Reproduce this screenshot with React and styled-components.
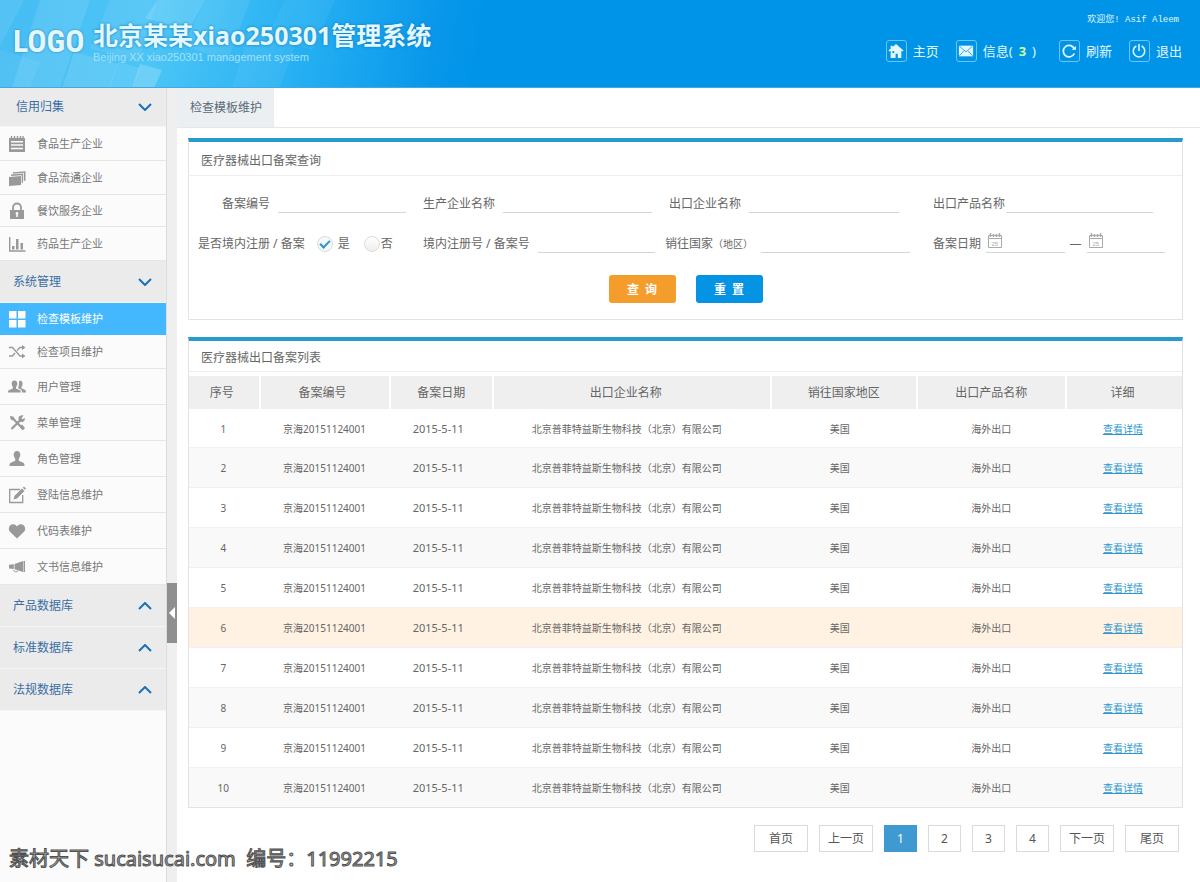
import React, { useState } from 'react';
import styled, { createGlobalStyle, css } from 'styled-components';

const GlobalStyle = createGlobalStyle`
  * {
    box-sizing: border-box;
  }
  body {
    margin: 0;
    background: #fff;
    color: #666;
    font-family: "Noto Sans", "Noto Sans CJK SC", sans-serif;
    font-size: 12px;
    line-height: 16px;
  }
  button, input {
    font: inherit;
    color: inherit;
  }
`;

/* ---------- icons ---------- */

const Glyph = styled.svg`
  display: block;
  flex: none;
  width: ${(props) => props.$size || 18}px;
  height: ${(props) => props.$size || 18}px;
`;

const Icon = ({ size, children }) => (
  <Glyph $size={size} viewBox="0 0 18 18" fill="currentColor" aria-hidden="true">
    {children}
  </Glyph>
);

const stroke = { fill: 'none', stroke: 'currentColor' };

const icons = {
  notepad: (
    <g>
      <path fillRule="evenodd" d="M1 3h16v14H1zM3 6v1.500h12V6zM3 9.300v1.500h12V9.300zM3 12.700v1.500h12v-1.500z" />
      <path {...stroke} strokeWidth="1.400" d="M3.500 1v3M6.500 1v3M9.500 1v3M12.500 1v3M15 1v3" />
    </g>
  ),
  layers: (
    <g>
      <path d="M1 8l12-1v9l-12 1z" />
      <path d="M3 5.500L15 4.500v9.500h-1.300V6.200L3 7zM5 3.300l12.500-1v9.500h-1.700V3.800L5 4.700z" />
    </g>
  ),
  lock: (
    <g>
      <path {...stroke} strokeWidth="1.800" d="M5 8V5.500a4 4 0 0 1 8 0V8" />
      <path fillRule="evenodd" d="M2 8h14v9H2zM9 10a1.500 1.500 0 0 0-.8 2.700V15h1.600v-2.300A1.500 1.500 0 0 0 9 10z" />
    </g>
  ),
  chart: (
    <g>
      <path {...stroke} strokeWidth="1.400" d="M1.700 2v14H17.500" />
      <path d="M4 11h2.500v3.500H4zM8 4h2.500v10.500H8zM12.500 8H15v6.500h-2.500z" />
    </g>
  ),
  grid: <path d="M1 1h7.500v7.500H1zM10 1h7.500v7.500H10zM1 10h7.500v7.500H1zM10 10h7.500v7.500H10z" />,
  shuffle: (
    <g>
      <path {...stroke} strokeWidth="1.300" d="M1 4.500h3.500L12 13h3M1 13h3.500l2.500-3M9 7.500l3-3h3" />
      <path d="M14 2l3.500 2.500L14 7zM14 10.500l3.500 2.500-3.500 2.500z" />
    </g>
  ),
  users: (
    <g>
      <path d="M6.500 2.500c2 0 3 1.500 2.800 3.500-.1 1.400-.8 2.300-1.300 3v1.500l4 1.700c.6.400.8 1 .8 2.300H0c0-1.300.2-1.900.8-2.300l4-1.700V9C4.300 8.300 3.800 7.400 3.700 6c-.2-2 .8-3.500 2.800-3.500z" />
      <path d="M11 3c2.400-.7 3.800.8 3.600 3-.1 1.300-.7 2.300-1.200 3v1.300l3.400 1.500c.9.500 1.200 1.200 1.200 2.700h-4c0-2-.5-3-2.300-3.600l-1.500-.7C10.600 8.500 11.300 5.500 11 3z" />
    </g>
  ),
  tools: (
    <g>
      <path {...stroke} strokeWidth="2.200" d="M4 3.500l10.500 11M3.500 15L12 6.500" />
      <path d="M2 2l3 .5 1.500 2-2 2L2.500 5zM15.500 1.500L13.500 4l.8 1.200L16.800 4c.5 2-.8 4-3 4-2.300 0-3.800-1.800-3.300-4 .4-1.800 2.500-3.100 5-2.500zM12 12l2-1.500 3 3.500-2.500 2.500z" />
    </g>
  ),
  user: (
    <path d="M9 1c2.300 0 3.500 1.700 3.300 4-.1 1.600-.9 2.800-1.500 3.600v2.200l4.500 2c.9.500 1.200 1.200 1.200 3.200h-15c0-2 .3-2.700 1.200-3.200l4.500-2V8.600C6.600 7.800 5.800 6.600 5.700 5 5.500 2.700 6.700 1 9 1z" />
  ),
  edit: (
    <g>
      <path {...stroke} strokeWidth="1.300" d="M12 3.500H1.700v13h13V9" />
      <path d="M5.500 13.500l1-3.800L14 2.500l2.500 2.500L9 12.500zM14.800 1.700L16 .6l2 2-1 1.200z" />
    </g>
  ),
  heart: (
    <path d="M9 16.500L2 9.800C-.3 7.300.8 2.500 4.800 2.200 6.800 2 8.300 3.200 9 4.600c.7-1.400 2.200-2.600 4.200-2.400 4 .3 5.100 5.100 2.800 7.600z" />
  ),
  horn: (
    <g>
      <path d="M6.500 6L15 3v11l-8.500-2.700zM15.500 3H17v11h-1.500zM1 6.800l4.800-.6v4.800L1 10.500z" />
      <path {...stroke} d="M5.500 12c.5 2 3.500 2.500 4.500.8" />
    </g>
  ),
  home: (
    <path fillRule="evenodd" d="M9 1l8.500 7.500-1.200 1.200L15 8.700V17h-4v-5H8.500v5H3V8.700l-1.300 1L.5 8.500 3 6.300V3h2.200v1.400zM5 9v2.200h2V9z" />
  ),
  mail: (
    <g>
      <path d="M1 3h16v12H1z" />
      <path fill="none" stroke="#2f9fe4" strokeWidth="1" d="M1.500 3.500L9 10l7.500-6.500M1.500 14.500L7 8.500M16.500 14.500L11 8.500" />
    </g>
  ),
  refresh: (
    <g>
      <path {...stroke} strokeWidth="2" d="M15.200 7A6.500 6.500 0 1 0 15 11.800" />
      <path d="M12 7.500h4.800V3.500z" />
    </g>
  ),
  power: <path {...stroke} strokeWidth="1.700" d="M9 1v8M6 3.400a6.500 6.500 0 1 0 6 0" />,
};

const Chevron = ({ up }) => (
  <svg width="14" height="8" viewBox="0 0 14 8" fill="none" stroke="#1b70b8" strokeWidth="2" aria-hidden="true">
    <path d={up ? 'M1 7l6-6 6 6' : 'M1 1l6 6 6-6'} />
  </svg>
);

/* ---------- header ---------- */

const Header = styled.header`
  position: relative;
  display: flex;
  justify-content: space-between;
  height: 88px;
  overflow: hidden;
  color: #e2f8ff;
  background: linear-gradient(100deg, #46bdf3 0, #4cc5f6 160px, #27b1f3 300px, #0796ea 440px, #0094e8 480px);
  border-bottom: 1px solid #3fa9e0;
`;

const Shards = styled.svg`
  position: absolute;
  left: 0;
  top: 0;
`;

const Brand = styled.div`
  position: relative;
  display: flex;
  align-items: center;
  gap: 8px;
  padding: 0 0 5px 13px;
`;

const Logo = styled.div`
  width: 72px;
  font-family: "Roboto Condensed", "Liberation Sans", sans-serif;
  font-size: 32px;
  line-height: 40px;
  font-weight: 700;
  text-shadow: 0 0 2px #1a6ea5;
`;

const Title = styled.h1`
  margin: 0;
  font-size: 25px;
  line-height: 32px;
  font-weight: 700;
  text-shadow: 0 0 3px #1476b5;
`;

const Subtitle = styled.div`
  font-family: "Liberation Sans", sans-serif;
  font-size: 11px;
  line-height: 12px;
  color: #a5e0fb;
`;

const HeaderSide = styled.div`
  position: relative;
  display: flex;
  flex-direction: column;
  align-items: flex-end;
  gap: 12px;
  padding: 12px 18px 0 0;
`;

const Welcome = styled.div`
  padding-right: 3px;
  font-family: "Liberation Mono", "Noto Sans CJK SC", monospace;
  font-size: 9px;
`;

const HeaderNav = styled.nav`
  display: flex;
  gap: 17px;
`;

const HeaderLink = styled.a`
  display: flex;
  align-items: center;
  gap: 6px;
  padding-right: ${(props) => (props.$spaced ? 6 : 0)}px;
  font-size: 13px;
  line-height: 22px;
  color: inherit;
  text-decoration: none;
  white-space: nowrap;
`;

const IconBox = styled.span`
  display: grid;
  place-items: center;
  width: 21px;
  height: 22px;
  border: 1px solid #6cc5f5;
  border-radius: 3px;
`;

const Count = styled.b`
  margin: 0 6px;
  color: #c8ff9e;
`;

const PageHeader = () => (
  <Header>
    <Shards width="450" height="88" viewBox="0 0 450 88" fill="#fff" aria-hidden="true">
      <path opacity=".1" d="M40 0h50L60 88H12z" />
      <path opacity=".08" d="M0 0h24L0 46z" />
      <path opacity=".14" d="M158 0h47l-16 30-44-12z" />
      <path opacity=".08" d="M110 0h48l-20 62-48-14z" />
      <path opacity=".08" d="M205 0h45l-22 60-45-14z" />
      <path opacity=".12" d="M74 52l44 12-8 24H62z" />
      <path opacity=".2" d="M140 64l22 6-8 18h-22z" />
      <path opacity=".1" d="M118 62l22 6-7 20h-24z" />
      <path opacity=".06" d="M250 30l46 12-16 46h-48z" />
      <path opacity=".05" d="M285 0h50l-22 50-46-12z" />
      <path opacity=".06" d="M0 50l40 12-10 26H0z" />
    </Shards>
    <Brand>
      <Logo>LOGO</Logo>
      <div>
        <Title>北京某某xiao250301管理系统</Title>
        <Subtitle>Beijing XX xiao250301 management system</Subtitle>
      </div>
    </Brand>
    <HeaderSide>
      <Welcome>欢迎您! Asif Aleem</Welcome>
      <HeaderNav>
        <HeaderLink href="#home"><IconBox><Icon size={16}>{icons.home}</Icon></IconBox>主页</HeaderLink>
        <HeaderLink href="#mail" $spaced>
          <IconBox><Icon size={16}>{icons.mail}</Icon></IconBox>
          <span>信息(<Count>3</Count>)</span>
        </HeaderLink>
        <HeaderLink href="#refresh"><IconBox><Icon size={16}>{icons.refresh}</Icon></IconBox>刷新</HeaderLink>
        <HeaderLink href="#exit"><IconBox><Icon size={16}>{icons.power}</Icon></IconBox>退出</HeaderLink>
      </HeaderNav>
    </HeaderSide>
  </Header>
);

/* ---------- sidebar ---------- */

const Sidebar = styled.aside`
  flex: none;
  width: 166px;
  background: #fbfbfb;
`;

const GroupButton = styled.button`
  display: flex;
  align-items: center;
  justify-content: space-between;
  width: 100%;
  height: ${(props) => (props.$first ? 39 : 42)}px;
  padding: 0 14px 0 ${(props) => (props.$first ? 16 : 13)}px;
  border: 0;
  border-bottom: 1px solid #f6f6f6;
  background: #ebebeb;
  color: #3a6ea5;
  text-align: left;
  cursor: pointer;
`;

const Menu = styled.ul`
  margin: 0;
  padding: 0;
  list-style: none;
`;

const itemHeights = { small: 32, medium: 34, large: 36 };

const MenuLink = styled.a`
  display: flex;
  align-items: center;
  gap: 11px;
  height: ${(props) => itemHeights[props.$height]}px;
  padding-left: 8px;
  border-bottom: 1px solid #e6e6e6;
  color: #777;
  font-size: 11px;
  text-decoration: none;
  svg {
    color: #999;
  }
  ${(props) => props.$active && css`
    background: #43b8fe;
    border-color: #43b8fe;
    color: #fff;
    svg {
      color: #fff;
    }
  `}
`;

const Splitter = styled.div`
  display: flex;
  flex-direction: column;
  flex: none;
  width: 11px;
  padding-top: 495px;
  background: #efefef;
  border-left: 1px solid #dcdcdc;
`;

const CollapseButton = styled.button`
  display: grid;
  place-items: center;
  height: 60px;
  padding: 0;
  border: 0;
  background: #8f8f8f;
  cursor: pointer;
`;

const groups = [
  {
    title: '信用归集',
    open: true,
    items: [
      ['notepad', '食品生产企业', 'medium'],
      ['layers', '食品流通企业', 'medium'],
      ['lock', '餐饮服务企业', 'small'],
      ['chart', '药品生产企业', 'medium'],
    ],
  },
  {
    title: '系统管理',
    open: true,
    items: [
      ['grid', '检查模板维护', 'small'],
      ['shuffle', '检查项目维护', 'medium'],
      ['users', '用户管理', 'large'],
      ['tools', '菜单管理', 'large'],
      ['user', '角色管理', 'large'],
      ['edit', '登陆信息维护', 'large'],
      ['heart', '代码表维护', 'large'],
      ['horn', '文书信息维护', 'large'],
    ],
  },
  { title: '产品数据库', items: [] },
  { title: '标准数据库', items: [] },
  { title: '法规数据库', items: [] },
];

const SideMenu = () => (
  <Sidebar>
    {groups.map((group, i) => (
      <div key={group.title}>
        <GroupButton type="button" $first={i === 0}>
          {group.title}
          <Chevron up={!group.open} />
        </GroupButton>
        <Menu>
          {group.items.map(([icon, label, height]) => (
            <li key={label}>
              <MenuLink href="#menu" $height={height} $active={icon === 'grid'}>
                <Icon>{icons[icon]}</Icon>
                {label}
              </MenuLink>
            </li>
          ))}
        </Menu>
      </div>
    ))}
  </Sidebar>
);

/* ---------- content ---------- */

const Body = styled.div`
  display: flex;
  min-height: calc(100vh - 88px);
`;

const Main = styled.main`
  flex: 1;
  min-width: 0;
`;

const TabBar = styled.div`
  display: flex;
  height: 40px;
  border-bottom: 1px solid #e3e8e8;
`;

const Tab = styled.a`
  padding: 12px 12px 11px 13px;
  background: #eceff1;
  color: #5a6b7b;
  text-decoration: none;
`;

const Content = styled.div`
  display: flex;
  flex-direction: column;
  gap: 17px;
  padding: 10px 17px 0 11px;
`;

const Panel = styled.section`
  border: 1px solid #e3e3e3;
  border-top: 4px solid #259ccb;
`;

const PanelTitle = styled.h2`
  margin: 0;
  padding: ${(props) => (props.$tight ? '9px 12px 5px' : '11px 12px 6px')};
  border-bottom: 1px solid #eee;
  font-size: 12px;
  line-height: 16px;
  font-weight: 400;
`;

const Form = styled.form`
  padding: 17px 9px 16px;
`;

const Fields = styled.div`
  display: grid;
  grid-template-columns: minmax(0, 225fr) minmax(0, 242fr) minmax(0, 268fr) minmax(0, 240fr);
  row-gap: 20px;
`;

const Field = styled.div`
  display: flex;
  align-items: flex-end;
  gap: ${(props) => props.$gap || 8}px;
  height: 20px;
  padding-left: ${(props) => props.$start || 0}px;
  padding-right: ${(props) => props.$end || 0}px;
  line-height: 18px;
  white-space: nowrap;
`;

const TextInput = styled.input`
  flex: 1;
  min-width: 0;
  height: 20px;
  padding: 0 4px;
  border: 0;
  border-bottom: 1px solid #d4d4d4;
  background: none;
  outline: none;
`;

const Choice = styled.label`
  display: flex;
  align-items: center;
  gap: ${(props) => (props.$wide ? 5 : 1)}px;
  margin-left: ${(props) => (props.$wide ? 4 : 6)}px;
`;

const Radio = styled.input`
  appearance: none;
  display: grid;
  place-items: center;
  width: 16px;
  height: 16px;
  margin: 0;
  border: 1px solid #dcdcdc;
  border-radius: 50%;
  background: linear-gradient(#fff, #eee);
  &:checked {
    background: #f2fafd;
  }
  &:checked::after {
    content: "";
    width: 8px;
    height: 4px;
    margin-bottom: 2px;
    border: solid #3293c4;
    border-width: 0 0 2px 2px;
    transform: rotate(-45deg);
  }
`;

const Small = styled.span`
  font-size: 10px;
`;

const DateField = styled.label`
  display: flex;
  flex: 1;
  height: 20px;
  border-bottom: 1px solid #d4d4d4;
  color: #aaa;
`;

const DateInput = styled.input`
  flex: 1;
  width: 0;
  padding: 0;
  border: 0;
  background: none;
  outline: none;
`;

const Calendar = () => (
  <svg width="17" height="17" viewBox="0 0 17 17" fill="none" stroke="currentColor" aria-hidden="true">
    <path d="M2.500 2.500h13v12h-13zM2.500 5.500h13" />
    <path strokeWidth="1.500" d="M4.500 0v4M7.500 1v3M10.500 1v3M13.500 0v4" />
    <text x="5.500" y="12.500" fontSize="6" fontFamily="Liberation Sans" fill="currentColor" stroke="none">25</text>
  </svg>
);

const Actions = styled.div`
  display: flex;
  justify-content: center;
  gap: 20px;
  margin-top: 22px;
`;

const ActionButton = styled.button`
  width: 67px;
  height: 28px;
  padding: 1px 0 0;
  border: 0;
  border-radius: 3px;
  background: ${(props) => (props.$primary ? '#f59d2c' : '#0593e3')};
  color: #fff;
  font-weight: 700;
  white-space: pre;
  cursor: pointer;
`;

const SearchPanel = () => {
  const [registered, setRegistered] = useState('yes');

  return (
    <Panel>
      <PanelTitle>医疗器械出口备案查询</PanelTitle>
      <Form onSubmit={(e) => e.preventDefault()}>
        <Fields>
          <Field $start={24} $end={17}>
            <label htmlFor="recordNo">备案编号</label>
            <TextInput id="recordNo" />
          </Field>
          <Field $end={13}>
            <label htmlFor="maker">生产企业名称</label>
            <TextInput id="maker" />
          </Field>
          <Field $start={4} $end={34}>
            <label htmlFor="exporter">出口企业名称</label>
            <TextInput id="exporter" />
          </Field>
          <Field $gap={1} $end={20}>
            <label htmlFor="product">出口产品名称</label>
            <TextInput id="product" />
          </Field>
          <Field role="radiogroup" aria-label="是否境内注册 / 备案">
            <span>是否境内注册 / 备案</span>
            <Choice $wide>
              <Radio type="radio" name="registered" checked={registered === 'yes'} onChange={() => setRegistered('yes')} />
              是
            </Choice>
            <Choice>
              <Radio type="radio" name="registered" checked={registered === 'no'} onChange={() => setRegistered('no')} />
              否
            </Choice>
          </Field>
          <Field $end={10}>
            <label htmlFor="domesticNo">境内注册号 / 备案号</label>
            <TextInput id="domesticNo" />
          </Field>
          <Field $end={23}>
            <label htmlFor="country">销往国家<Small>（地区）</Small></label>
            <TextInput id="country" />
          </Field>
          <Field $gap={5} $end={8}>
            <span>备案日期</span>
            <DateField><Calendar /><DateInput aria-label="备案日期起" /></DateField>
            <span>—</span>
            <DateField><Calendar /><DateInput aria-label="备案日期止" /></DateField>
          </Field>
        </Fields>
        <Actions>
          <ActionButton type="submit" $primary>查  询</ActionButton>
          <ActionButton type="reset">重  置</ActionButton>
        </Actions>
      </Form>
    </Panel>
  );
};

const Table = styled.table`
  width: 100%;
  margin-top: 4px;
  border-collapse: collapse;
  table-layout: fixed;
  font-size: 10px;
  text-align: center;
`;

const Th = styled.th`
  width: ${(props) => props.$width};
  height: 33px;
  padding: 0 ${(props) => props.$shift || 0}px 0 0;
  border-right: 2px solid #fff;
  background: #efefef;
  font-size: 12px;
  font-weight: 400;
  &:last-child {
    border-right: 0;
  }
`;

const Row = styled.tr`
  height: 40px;
  border-top: 1px solid #f0f0f0;
  background: ${(props) => (props.$selected ? '#fff2e3' : '#fff')};
  &:nth-child(even) {
    background: ${(props) => (props.$selected ? '#fff2e3' : '#f9f9f9')};
  }
  &:first-child {
    height: 38px;
    border-top: 0;
  }
`;

const Td = styled.td`
  padding: 2px ${(props) => props.$shift || 0}px 0 0;
`;

const DateText = styled.span`
  font-size: 11px;
`;

const DetailLink = styled.a`
  color: #2f97cf;
`;

const columns = [
  { name: '序号', width: '7.1%', shift: 4 },
  { name: '备案编号', width: '13.1%', shift: 4 },
  { name: '备案日期', width: '10.4%' },
  { name: '出口企业名称', width: '28%', shift: 12 },
  { name: '销往国家地区', width: '14.7%' },
  { name: '出口产品名称', width: '15%' },
  { name: '详细', width: '11.7%', shift: 4 },
];

const records = Array.from({ length: 10 }, (_, i) => ({
  id: i + 1,
  code: '京海20151124001',
  date: '2015-5-11',
  company: '北京普菲特益斯生物科技（北京）有限公司',
  country: '美国',
  product: '海外出口',
}));

const ListPanel = () => (
  <Panel>
    <PanelTitle $tight>医疗器械出口备案列表</PanelTitle>
    <Table>
      <thead>
        <tr>
          {columns.map(({ name, width, shift }) => (
            <Th key={name} $width={width} $shift={shift}>{name}</Th>
          ))}
        </tr>
      </thead>
      <tbody>
        {records.map((record) => (
          <Row key={record.id} $selected={record.id === 6}>
            <Td $shift={2}>{record.id}</Td>
            <Td>{record.code}</Td>
            <Td $shift={6}><DateText>{record.date}</DateText></Td>
            <Td $shift={10}>{record.company}</Td>
            <Td $shift={8}>{record.country}</Td>
            <Td>{record.product}</Td>
            <Td $shift={2}><DetailLink href="#detail">查看详情</DetailLink></Td>
          </Row>
        ))}
      </tbody>
    </Table>
  </Panel>
);

const Pager = styled.nav`
  display: flex;
  justify-content: flex-end;
  gap: 11px;
  padding-right: 4px;
`;

const PageButton = styled.button`
  width: ${(props) => (props.$wide ? 54 : 33)}px;
  height: 27px;
  padding: 0;
  border: 1px solid ${(props) => (props.$current ? '#3f9ad1' : '#dadada')};
  background: ${(props) => (props.$current ? '#3f9ad1' : '#fff')};
  color: ${(props) => (props.$current ? '#fff' : '#555')};
  cursor: pointer;
`;

const pages = ['首页', '上一页', '1', '2', '3', '4', '下一页', '尾页'];

const Watermark = styled.div`
  position: absolute;
  left: 9px;
  bottom: 11px;
  font-size: 20px;
  line-height: 24px;
  color: #b5b5b5;
  -webkit-text-stroke: 1px #505050;
  white-space: pre;
`;

const App = () => (
  <>
    <GlobalStyle />
    <PageHeader />
    <Body>
      <SideMenu />
      <Splitter>
        <CollapseButton type="button" aria-label="收起菜单">
          <svg width="6" height="12" viewBox="0 0 6 12" fill="#fff" aria-hidden="true"><path d="M6 0v12L0 6z" /></svg>
        </CollapseButton>
      </Splitter>
      <Main>
        <TabBar>
          <Tab href="#template">检查模板维护</Tab>
        </TabBar>
        <Content>
          <SearchPanel />
          <ListPanel />
          <Pager aria-label="分页">
            {pages.map((page) => (
              <PageButton key={page} type="button" $wide={page.length > 1} $current={page === '1'}>{page}</PageButton>
            ))}
          </Pager>
        </Content>
      </Main>
    </Body>
    <Watermark>素材天下 sucaisucai.com  编号：11992215</Watermark>
  </>
);

export default App;
